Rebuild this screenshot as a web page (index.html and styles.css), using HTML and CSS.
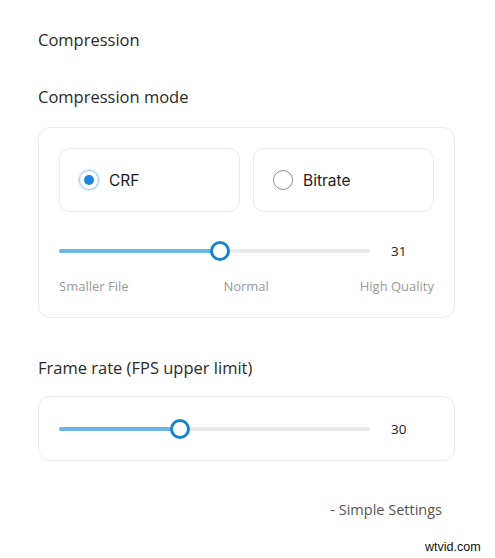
FILE: index.html
```html
<!DOCTYPE html>
<html>
<head>
<meta charset="utf-8">
<link rel="stylesheet" href="styles.css">
</head>
<body>
<div class="page">
  <div class="title">Compression</div>
  <div class="label">Compression mode</div>
  <div class="card card-mode">
    <div class="modes">
      <div class="mode"><span class="radio on"></span><span class="mode-text">CRF</span></div>
      <div class="mode"><span class="radio"></span><span class="mode-text">Bitrate</span></div>
    </div>
    <div class="slider-row">
      <div class="track"><div class="fill" style="width:161px"></div><div class="thumb" style="left:161px"></div></div>
      <div class="value">31</div>
    </div>
    <div class="scale">
      <span>Smaller File</span><span class="mid">Normal</span><span>High Quality</span>
    </div>
  </div>
  <div class="label label-fps">Frame rate (FPS upper limit)</div>
  <div class="card card-fps">
    <div class="slider-row">
      <div class="track"><div class="fill" style="width:121px"></div><div class="thumb" style="left:121px"></div></div>
      <div class="value">30</div>
    </div>
  </div>
  <div class="footer"><span class="link">- Simple Settings</span></div>
  <div class="watermark">wtvid.com</div>
</div>
</body>
</html>
```
FILE: styles.css
```css
html, body {
  margin: 0;
  padding: 0;
  background: #fff;
}
body {
  font-family: "Open Sans", "Noto Sans", sans-serif;
  color: #222;
  width: 495px;
  height: 558px;
  overflow: hidden;
}
.page {
  padding: 28px 40px 0 38px;
  display: flex;
  flex-direction: column;
}
.title {
  font-size: 16.5px;
  line-height: 24px;
  color: #2a2a2a;
}
.label {
  font-size: 16.5px;
  line-height: 24px;
  margin-top: 33px;
  color: #2a2a2a;
}
.label-fps {
  margin-top: 38px;
}
.card {
  border: 1px solid #ececec;
  border-radius: 12px;
  padding: 0 20px;
}
.card-mode {
  margin-top: 18px;
  padding-top: 20px;
  box-sizing: border-box;
  height: 191px;
}
.modes {
  display: flex;
  gap: 13px;
}
.mode {
  flex: 1;
  height: 64px;
  box-sizing: border-box;
  border: 1px solid #ececec;
  border-radius: 11px;
  display: flex;
  align-items: center;
  padding-left: 19px;
  gap: 10px;
}
.radio {
  width: 20px;
  height: 20px;
  border: 1px solid #8a8a8a;
  border-radius: 50%;
  box-sizing: border-box;
  position: relative;
}
.radio.on {
  border-color: #9ccbeb;
  box-shadow: 0 0 0 1px #d8ecf8;
}
.radio.on::after {
  content: "";
  position: absolute;
  left: 4px;
  top: 4px;
  width: 10px;
  height: 10px;
  border-radius: 50%;
  background: #1a86dc;
}
.mode-text {
  font-family: "Inter", "Open Sans", sans-serif;
  font-size: 15.5px;
  color: #222;
}
.slider-row {
  display: flex;
  align-items: center;
  height: 24px;
}
.card-mode .slider-row {
  margin-top: 27px;
}
.track {
  width: 311px;
  height: 4px;
  background: #ebebeb;
  border-radius: 2px;
  position: relative;
}
.fill {
  height: 4px;
  background: #6ab6e6;
  border-radius: 2px;
}
.thumb {
  position: absolute;
  top: -8px;
  width: 20px;
  height: 20px;
  margin-left: -10px;
  box-sizing: border-box;
  border: 3px solid #1b83cc;
  border-radius: 50%;
  background: #fff;
}
.value {
  margin-left: 21px;
  font-size: 13.5px;
  color: #222;
}
.scale {
  display: flex;
  justify-content: space-between;
  margin-top: 14px;
  font-size: 13px;
  color: #9a9a9a;
}
.scale .mid {
  margin-left: 4px;
}
.card-fps {
  margin-top: 16px;
  height: 65px;
  box-sizing: border-box;
  padding-top: 20px;
}
.footer {
  display: flex;
  justify-content: flex-end;
  margin-top: 39px;
  padding-right: 13px;
}
.link {
  font-size: 14.5px;
  color: #555;
}
.watermark {
  position: absolute;
  left: 425px;
  top: 540px;
  font-family: "Liberation Sans", Arial, sans-serif;
  font-size: 12.5px;
  color: #111;
}
```
